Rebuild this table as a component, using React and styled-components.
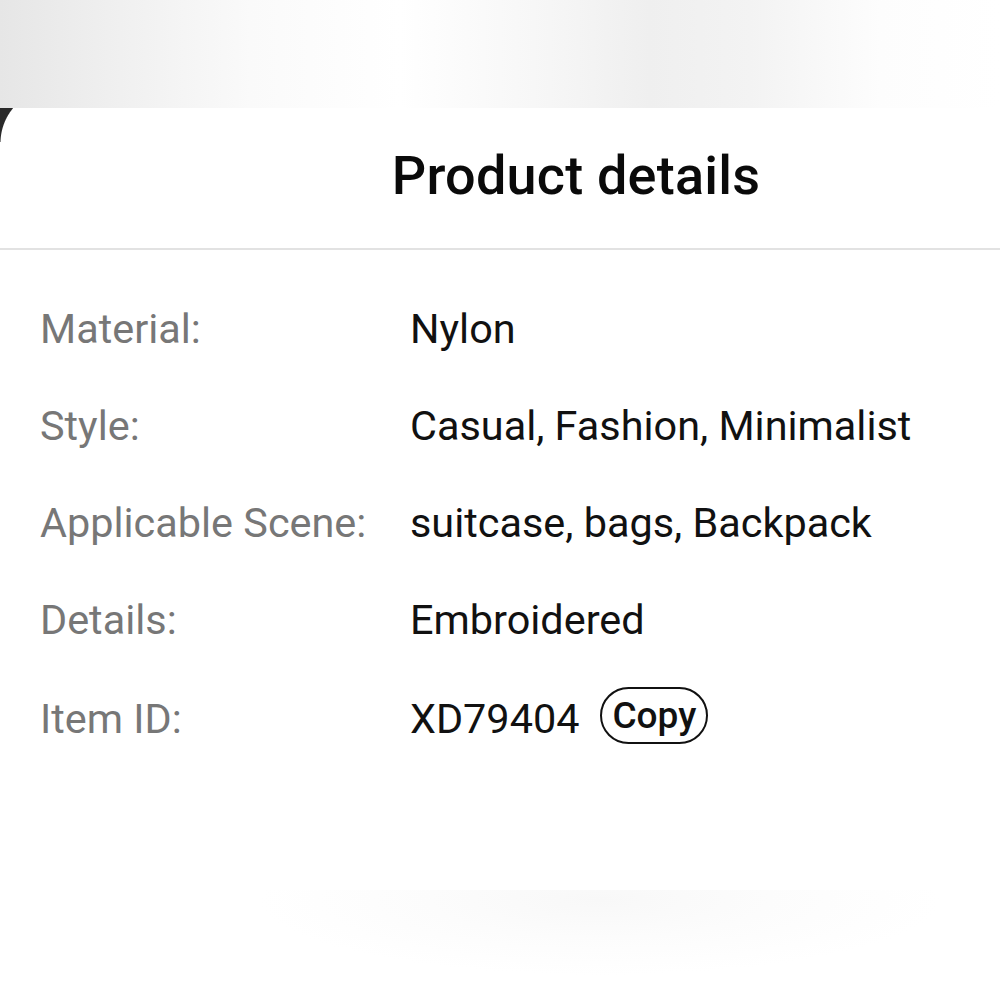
import styled, { createGlobalStyle } from "styled-components";

const GlobalStyle = createGlobalStyle`
  html, body {
    margin: 0;
    padding: 0;
    background: #ffffff;
  }
  body {
    font-family: Roboto, "Liberation Sans", sans-serif;
  }
`;

const details = [
  { label: "Material:", value: "Nylon" },
  { label: "Style:", value: "Casual, Fashion, Minimalist" },
  { label: "Applicable Scene:", value: "suitcase, bags, Backpack" },
  { label: "Details:", value: "Embroidered" },
  { label: "Item ID:", value: "XD79404", copy: true },
];

// Product details sheet shown over a blurred page
const App = () => {
  return (
    <Page>
      <GlobalStyle />
      <Backdrop />
      <Sheet>
        <Corner />
        <Header>
          <Title>Product details</Title>
        </Header>
        <List>
          {details.map((item) => (
            <Row key={item.label}>
              <Label>{item.label}</Label>
              <Value>
                {item.value}
                {item.copy && <CopyButton>Copy</CopyButton>}
              </Value>
            </Row>
          ))}
        </List>
        <Fade />
      </Sheet>
    </Page>
  );
};

const Page = styled.div`
  width: 1000px;
  height: 1000px;
  overflow: hidden;
  display: flex;
  flex-direction: column;
  background: #ffffff;
`;

const Backdrop = styled.div`
  height: 108px;
  flex-shrink: 0;
  background: linear-gradient(
    90deg,
    #e6e6e6 0%,
    #f0f0f0 12%,
    #fafafa 25%,
    #ffffff 40%,
    #f6f6f6 55%,
    #efefef 65%,
    #f3f3f3 75%,
    #fdfdfd 88%,
    #ffffff 100%
  );
`;

const Sheet = styled.div`
  position: relative;
  flex: 1;
  display: flex;
  flex-direction: column;
  background: #ffffff;
`;

const Corner = styled.div`
  position: absolute;
  left: 0;
  top: 0;
  width: 16px;
  height: 34px;
  background: radial-gradient(
    circle 55px at 55px 35px,
    rgba(255, 255, 255, 0) 54px,
    #2a2a2a 55px
  );
`;

const Header = styled.div`
  height: 142px;
  display: flex;
  align-items: center;
  justify-content: center;
  padding-left: 152px;
  border-bottom: 2px solid #e2e2e2;
  box-sizing: border-box;
`;

const Title = styled.h1`
  margin: 0 0 6px;
  font-size: 54px;
  font-weight: 500;
  color: #0a0a0a;
  letter-spacing: 0.2px;
`;

const List = styled.div`
  display: flex;
  flex-direction: column;
  gap: 49px;
  padding: 55px 40px 0;
`;

const Row = styled.div`
  display: grid;
  grid-template-columns: 370px 1fr;
  align-items: center;
  height: 48px;
  font-size: 41.4px;
  line-height: 48px;
`;

const Label = styled.span`
  color: #777777;
  white-space: nowrap;
`;

const Value = styled.span`
  display: flex;
  align-items: center;
  gap: 21px;
  color: #111111;
  white-space: nowrap;
`;

const CopyButton = styled.button`
  height: 57px;
  margin-top: -6px;
  padding: 0 10px;
  border: 2px solid #111111;
  border-radius: 29px;
  background: #ffffff;
  color: #111111;
  font-family: Roboto, "Liberation Sans", sans-serif;
  font-size: 37px;
  font-weight: 500;
  line-height: 1;
  box-sizing: border-box;
`;

const Fade = styled.div`
  margin-top: auto;
  height: 110px;
  background: radial-gradient(
    ellipse 340px 75px at 600px 10px,
    #f8f8f8 0%,
    #fcfcfc 50%,
    rgba(255, 255, 255, 0) 100%
  );
`;

export default App;
